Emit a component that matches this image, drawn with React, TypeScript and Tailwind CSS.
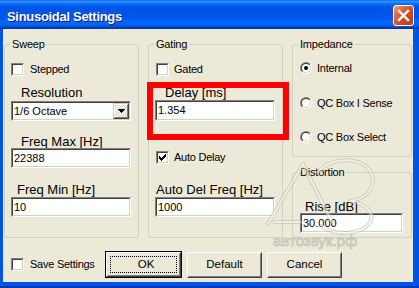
import React from "react";

function Sunken({ className = "", children }: { className?: string; children?: React.ReactNode }) {
  return (
    <div className={`shrink-0 border border-t-[#808080] border-l-[#808080] border-r-white border-b-white ${className}`}>
      <div className="w-full h-full border border-t-[#404040] border-l-[#404040] border-r-[#D4D0C8] border-b-[#D4D0C8] bg-white flex items-center overflow-hidden">
        {children}
      </div>
    </div>
  );
}

function CheckBox({ checked = false }: { checked?: boolean }) {
  return (
    <div className="w-[13px] h-[13px] shrink-0 border border-t-[#808080] border-l-[#808080] border-r-white border-b-white">
      <div className="w-full h-full border border-t-[#404040] border-l-[#404040] border-r-[#D4D0C8] border-b-[#D4D0C8] bg-white">
        {checked && (
          <svg width="9" height="9" viewBox="0 0 9 9" className="block" shapeRendering="crispEdges">
            <g transform="translate(1,1)" fill="#000">
              <rect x="6" y="0" width="1" height="1" />
              <rect x="5" y="1" width="2" height="1" />
              <rect x="0" y="2" width="1" height="1" />
              <rect x="4" y="2" width="3" height="1" />
              <rect x="0" y="3" width="2" height="1" />
              <rect x="3" y="3" width="3" height="1" />
              <rect x="0" y="4" width="5" height="1" />
              <rect x="1" y="5" width="3" height="1" />
              <rect x="2" y="6" width="1" height="1" />
            </g>
          </svg>
        )}
      </div>
    </div>
  );
}

function Radio({ checked = false }: { checked?: boolean }) {
  return (
    <svg width="12" height="12" viewBox="0 0 12 12" className="shrink-0 block">
      <defs>
        <linearGradient id="rgo" x1="0" y1="0" x2="1" y2="1">
          <stop offset="0.5" stopColor="#808080" />
          <stop offset="0.5" stopColor="#FFFFFF" />
        </linearGradient>
        <linearGradient id="rgi" x1="0" y1="0" x2="1" y2="1">
          <stop offset="0.5" stopColor="#404040" />
          <stop offset="0.5" stopColor="#D4D0C8" />
        </linearGradient>
      </defs>
      <circle cx="6" cy="6" r="6" fill="url(#rgo)" />
      <circle cx="6" cy="6" r="5" fill="url(#rgi)" />
      <circle cx="6" cy="6" r="4" fill="#FFFFFF" />
      {checked && <circle cx="6" cy="6" r="2" fill="#000000" />}
    </svg>
  );
}

function Bevel({ children }: { children?: React.ReactNode }) {
  return (
    <div className="w-full h-full border border-t-white border-l-white border-r-[#404040] border-b-[#404040] bg-[#ECE9D8]">
      <div className="w-full h-full border border-t-[#ECE9D8] border-l-[#ECE9D8] border-r-[#808080] border-b-[#808080] flex items-center justify-center">
        {children}
      </div>
    </div>
  );
}

function Button({ label }: { label: string }) {
  return (
    <div className="w-[75px] h-[26px] shrink-0">
      <Bevel>
        <span className="text-[11.5px] leading-[13px]">{label}</span>
      </Bevel>
    </div>
  );
}

function DefaultButton({ label }: { label: string }) {
  return (
    <div className="w-[77px] h-[27px] shrink-0 border border-black">
      <Bevel>
        <div className="w-[67px] h-[17px] border border-dotted border-black flex items-center justify-center">
          <span className="text-[11.5px] leading-[13px] pl-[5px]">{label}</span>
        </div>
      </Bevel>
    </div>
  );
}

function Group({ title, className = "", children }: { title: string; className?: string; children?: React.ReactNode }) {
  return (
    <fieldset className={`min-w-0 border border-[#D0D0BF] rounded-[3px] pl-[5px] pr-0 pb-0 pt-0 m-0 shrink-0 ${className}`}>
      <legend className="px-[2px] text-[11px] leading-[13px] tracking-[-0.2px]">{title}</legend>
      <div className="pl-[1px] flex flex-col items-start">{children}</div>
    </fieldset>
  );
}

function Label13({ children, className = "" }: { children: React.ReactNode; className?: string }) {
  return <div className={`text-[13px] leading-[13px] whitespace-nowrap ${className}`}>{children}</div>;
}

function Small({ children, className = "" }: { children: React.ReactNode; className?: string }) {
  return <span className={`text-[11px] leading-[13px] tracking-[-0.25px] whitespace-nowrap ${className}`}>{children}</span>;
}

function Field({ value, className = "" }: { value: string; className?: string }) {
  return (
    <Sunken className={className}>
      <span className="pl-[1px] text-[11px] leading-[13px]">{value}</span>
    </Sunken>
  );
}

export default function App() {
  return (
    <div className="relative w-[419px] h-[288px] overflow-hidden flex flex-col bg-[#0054E3] font-['Liberation_Sans',Arial,sans-serif] text-black">
      {/* Title bar */}
      <div className="h-[29px] shrink-0 flex items-start justify-between bg-[linear-gradient(180deg,#0058EE_0%,#3A93FF_4%,#288EFF_7%,#127DFF_10%,#036FFC_14%,#0262EE_18%,#0057E5_24%,#0054E3_30%,#0055EB_56%,#005BF5_66%,#026AFE_76%,#0062EF_86%,#0052D6_92%,#0040AB_96%,#003092_100%)]">
        <div className="pl-[7px] pt-[10px] text-[13px] leading-[13px] font-bold text-white tracking-[-0.3px] [text-shadow:1px_1px_0_#0A1883]">
          Sinusoidal Settings
        </div>
        <div className="mt-[5px] mr-[5px] w-[21px] h-[21px] rounded-[3px] border border-white bg-[linear-gradient(135deg,#F0A58A_0%,#E2663F_30%,#D2461C_65%,#C03A14_100%)] flex items-center justify-center">
          <svg width="13" height="13" viewBox="0 0 13 13">
            <path d="M2 2 L11 11 M11 2 L2 11" stroke="#FFFFFF" strokeWidth="2.4" strokeLinecap="square" />
          </svg>
        </div>
      </div>

      {/* Frame + client */}
      <div className="flex-1 flex pl-[3px] pr-[6px] pb-[4px] border-b-2 border-[#0038C0]">
        <div className="flex-1 bg-[#ECE9D8] flex flex-col pt-[9px] pl-[1px]">
          <div className="flex gap-[9px] items-start">
            {/* Sweep */}
            <Group title="Sweep" className="w-[135px] h-[200px]">
              <div className="mt-[12px] flex items-center h-[13px]">
                <CheckBox />
                <Small className="ml-[6px]">Stepped</Small>
              </div>
              <Label13 className="mt-[10px] pl-[10px]">Resolution</Label13>
              <Sunken className="mt-[2px] w-[120px] h-[20px]">
                <span className="flex-1 pl-[1px] text-[11px] leading-[13px]">1/6 Octave</span>
                <div className="w-[16px] h-[16px] shrink-0">
                  <div className="w-full h-full border border-t-[#D4D0C8] border-l-[#D4D0C8] border-r-[#404040] border-b-[#404040] bg-[#ECE9D8]">
                    <div className="w-full h-full border border-t-white border-l-white border-r-[#808080] border-b-[#808080] flex items-center justify-center">
                      <svg width="7" height="4" viewBox="0 0 7 4" shapeRendering="crispEdges">
                        <path d="M0 0 H7 V1 H6 V2 H5 V3 H4 V4 H3 V3 H2 V2 H1 V1 H0 Z" fill="#000" />
                      </svg>
                    </div>
                  </div>
                </div>
              </Sunken>
              <Label13 className="mt-[14px] pl-[10px]">Freq Max [Hz]</Label13>
              <Field value="22388" className="w-[120px] h-[20px]" />
              <Label13 className="mt-[15px] pl-[6px]">Freq Min [Hz]</Label13>
              <Field value="10" className="mt-[1px] w-[120px] h-[20px]" />
            </Group>

            {/* Gating */}
            <Group title="Gating" className="w-[135px] h-[200px]">
              <div className="mt-[12px] ml-[1px] flex items-center h-[13px]">
                <CheckBox />
                <Small className="ml-[5px]">Gated</Small>
              </div>
              <Label13 className="mt-[10px] pl-[10px]">Delay [ms]</Label13>
              <Field value="1.354" className="mt-[1px] w-[120px] h-[21px]" />
              <div className="mt-[30px] ml-[1px] flex items-center h-[13px]">
                <CheckBox checked />
                <Small className="ml-[5px]">Auto Delay</Small>
              </div>
              <Label13 className="mt-[19px] pl-[1px]">Auto Del Freq [Hz]</Label13>
              <Field value="1000" className="mt-[1px] w-[120px] h-[20px]" />
            </Group>

            {/* Right column */}
            <div className="w-[120px] flex flex-col gap-[9px] shrink-0">
              <Group title="Impedance" className="w-[120px] h-[119px]">
                <div className="mt-[11px] ml-[1px] flex items-center h-[12px]">
                  <Radio checked />
                  <Small className="ml-[5px]">Internal</Small>
                </div>
                <div className="mt-[23px] ml-[1px] flex items-center h-[12px]">
                  <Radio />
                  <Small className="ml-[5px]">QC Box I Sense</Small>
                </div>
                <div className="mt-[22px] ml-[1px] flex items-center h-[12px]">
                  <Radio />
                  <Small className="ml-[5px]">QC Box Select</Small>
                </div>
              </Group>
              <Group title="Distortion" className="w-[120px] h-[72px]">
                <Label13 className="mt-[21px] pl-[6px]">Rise [dB]</Label13>
                <Field value="30.000" className="ml-[1px] w-[103px] h-[20px]" />
              </Group>
            </div>
          </div>

          {/* Bottom row */}
          <div className="mt-[13px] flex items-center pl-[7px]">
            <div className="w-[94px] flex items-center">
              <CheckBox />
              <Small className="ml-[6px]">Save Settings</Small>
            </div>
            <div className="flex items-center gap-[5px]">
              <DefaultButton label="OK" />
              <Button label="Default" />
              <Button label="Cancel" />
            </div>
          </div>
        </div>
      </div>

      {/* Watermark */}
      <svg className="absolute left-0 top-0 pointer-events-none" width="419" height="288" viewBox="0 0 419 288">
        <g fill="none" strokeLinecap="round" strokeLinejoin="round" opacity="0.55">
          <path d="M268 224 L303 164 L332 222 M275 222 H300" stroke="#B8B6AC" strokeWidth="4" />
          <path d="M268 224 L303 164 L332 222 M275 222 H300" stroke="#F6F5EF" strokeWidth="2" />
          <path d="M318 172 C335 152 378 158 372 185 C369 196 358 200 350 201 C372 204 380 222 360 230 C345 236 330 232 322 226" stroke="#B8B6AC" strokeWidth="4" />
          <path d="M318 172 C335 152 378 158 372 185 C369 196 358 200 350 201 C372 204 380 222 360 230 C345 236 330 232 322 226" stroke="#F6F5EF" strokeWidth="2" />
        </g>
        <text x="273" y="246" fontFamily="Liberation Sans, Arial, sans-serif" fontSize="15" fill="#E4E2D8" stroke="#AEACA3" strokeWidth="0.6" opacity="0.8">
          автозвук.рф
        </text>
      </svg>

      {/* Red highlight annotation */}
      <div className="absolute left-[147px] top-[82px] w-[142px] h-[58px] border-[6px] border-[#FF0000] pointer-events-none" />
    </div>
  );
}
